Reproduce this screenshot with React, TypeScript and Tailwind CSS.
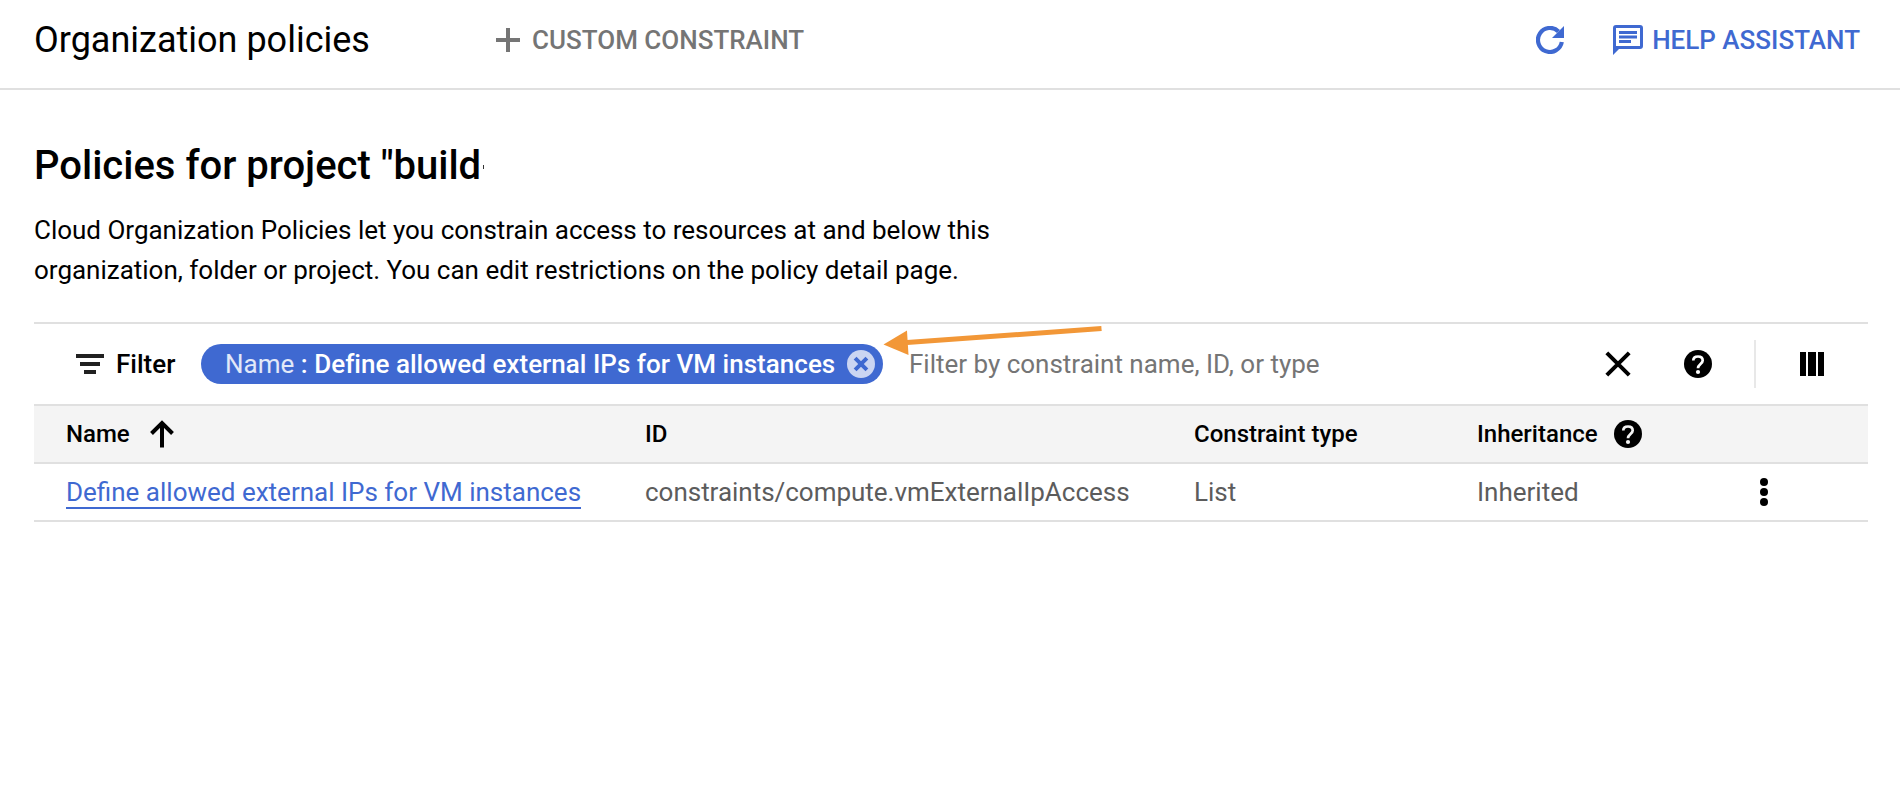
import React from "react";

const roboto = "font-['Roboto','Liberation_Sans',sans-serif]";

function HelpIcon({ mark = "#fff" }: { mark?: string }) {
  return (
    <svg width="28" height="28" className="shrink-0">
      <circle cx="14" cy="14" r="14" />
      <path
        d="M9.300 10.500C9.300 8 11.200 6.500 14 6.500s4.700 1.500 4.700 4c0 3.400-4.700 3.600-4.700 7.700"
        fill="none"
        stroke={mark}
        strokeWidth="2.700"
      />
      <circle cx="14" cy="22" r="2.100" fill={mark} />
    </svg>
  );
}

export default function App() {
  return (
    <div className={`h-[804px] w-[1900px] overflow-hidden bg-white text-black ${roboto}`}>
      <header className="flex h-[90px] items-center border-b-2 border-[#e0e0e0] pb-2 pl-[34px] pr-[40px]">
        <h1 className="w-[462px] text-[36px] leading-[48px]">Organization policies</h1>
        <button className="flex items-center text-[26px] font-medium text-[#757575]">
          <svg width="24" height="24" className="mr-3" fill="currentColor">
            <path d="M10 0h4v10h10v4H14v10h-4V14H0v-4h10z" />
          </svg>
          CUSTOM CONSTRAINT
        </button>
        <div className="ml-auto flex items-center text-[26px] font-medium text-[#3f69d1]">
          <svg width="28" height="28" className="mr-[49px]">
            <path d="M25.800 16A12 12 0 1 1 22.500 5.500" fill="none" stroke="currentColor" strokeWidth="4.200" />
            <path d="M28 0v12H16z" fill="currentColor" />
          </svg>
          <svg width="30" height="30" className="mr-[9px]" fill="currentColor">
            <path fillRule="evenodd" d="M3 0h24a3 3 0 0 1 3 3v18a3 3 0 0 1-3 3H6l-6 6V3a3 3 0 0 1 3-3zm0 3v18h24V3zM6 6h18v3H6zm0 4.500h18v3H6zM6 15h12v3H6z" />
          </svg>
          HELP ASSISTANT
        </div>
      </header>

      <main className="pl-[34px] pr-8">
        <h2 className="flex pt-[50px] text-[40px] font-medium leading-[52px]">
          Policies for project "build
          <span className="ml-[2px] mt-[25px] h-1 w-px bg-[#333]" />
        </h2>
        <p className="mt-[18px] w-[1000px] text-[26px] leading-[40px] tracking-[-0.01px]">
          Cloud Organization Policies let you constrain access to resources at and below this
          <br />
          organization, folder or project. You can edit restrictions on the policy detail page.
        </p>

        <div className="relative mt-8 flex h-[84px] items-center border-y-2 border-[#e0e0e0] pl-[42px] text-[26px]">
          <svg width="28" height="20" fill="#212121">
            <path d="M0 0h28v4H0zM4 8h20v4H4zM8 16h12v4H8z" />
          </svg>
          <span className="ml-3 w-[85px] font-medium">Filter</span>
          <div className="flex h-10 w-[682px] items-center justify-between rounded-full bg-[#3f69d1] pl-6 pr-2 text-white">
            <span className="whitespace-pre font-medium tracking-[0.02px]">
              <span className="font-normal text-white/85">Name</span> : Define allowed external IPs for VM instances
            </span>
            <svg width="28" height="28">
              <circle cx="14" cy="14" r="14" fill="#cbd5f2" />
              <path d="M8.100 8.100l11.800 11.800M19.900 8.100l-11.800 11.800" stroke="#3f69d1" strokeWidth="4" />
            </svg>
          </div>
          <span className="ml-[26px] tracking-[-0.01px] text-[#757575]">Filter by constraint name, ID, or type</span>
          <div className="ml-auto flex items-center pr-[44px]">
            <svg width="26" height="26" className="mr-[53px]">
              <path d="M1.800 1.800l22.400 22.400M24.200 1.800l-22.400 22.400" stroke="#000" strokeWidth="4" />
            </svg>
            <HelpIcon />
            <span className="ml-[42px] mr-[44px] h-12 w-[2px] bg-[#e8e8e8]" />
            <svg width="24" height="24">
              <path d="M0 0h6v24H0zM8 0h8v24H8zM18 0h6v24h-6z" />
            </svg>
          </div>
          <svg width="220" height="32" className="absolute left-[849px] top-0">
            <path d="M24 18.500L218.500 4.500" stroke="#f29737" strokeWidth="5" />
            <path d="M0.500 20.500L24 6.500L25.500 31z" fill="#f29737" />
          </svg>
        </div>

        <div className="grid h-[58px] grid-cols-[579px_549px_283px_1fr] items-center border-b-2 border-[#e0e0e0] bg-[#f4f4f4] pl-8 text-[24px] font-medium">
          <div className="flex items-center">
            Name
            <svg width="24" height="28" className="ml-5">
              <path d="M12 27.500V3M1.500 13.500L12 3l10.500 10.500" fill="none" stroke="#000" strokeWidth="4" />
            </svg>
          </div>
          <div>ID</div>
          <div>Constraint type</div>
          <div className="flex items-center gap-4">
            Inheritance
            <HelpIcon mark="#f4f4f4" />
          </div>
        </div>
        <div className="grid h-[58px] grid-cols-[579px_549px_283px_283px_1fr] items-center border-b-2 border-[#e0e0e0] pl-8 text-[26px] text-[#5c5c5c]">
          <div>
            <a className="inline-block border-b-2 border-[#3f69d1] leading-[30px] text-[#3f69d1]">
              Define allowed external IPs for VM instances
            </a>
          </div>
          <div className="tracking-[-0.02px]">constraints/compute.vmExternalIpAccess</div>
          <div>List</div>
          <div>Inherited</div>
          <svg width="8" height="28">
            <circle cx="4" cy="4" r="4" />
            <circle cx="4" cy="14" r="4" />
            <circle cx="4" cy="24" r="4" />
          </svg>
        </div>
      </main>
    </div>
  );
}
